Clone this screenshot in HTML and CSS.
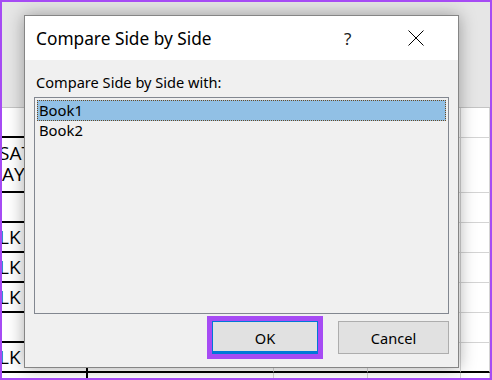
FILE: index.html
```html
<!DOCTYPE html>
<html lang="en">
<head>
  <meta charset="UTF-8" />
  <title>Compare Side by Side</title>
  <link rel="stylesheet" href="styles.css">
</head>
<body>
  <div class="screen">
    <div class="sheet">
      <div class="ribbon"></div>
      <div class="grid">
        <div class="row r-head">
          <div class="cell col-a"></div><div class="cell col-b"></div><div class="cell col-c"></div><div class="cell col-d"></div><div class="cell col-e"></div>
        </div>
        <div class="row r-tall">
          <div class="cell col-a two">SAT<br>AY</div><div class="cell col-b"></div><div class="cell col-c"></div><div class="cell col-d"></div><div class="cell col-e"></div>
        </div>
        <div class="row">
          <div class="cell col-a"></div><div class="cell col-b"></div><div class="cell col-c"></div><div class="cell col-d"></div><div class="cell col-e"></div>
        </div>
        <div class="row">
          <div class="cell col-a">LK</div><div class="cell col-b"></div><div class="cell col-c"></div><div class="cell col-d"></div><div class="cell col-e"></div>
        </div>
        <div class="row">
          <div class="cell col-a">LK</div><div class="cell col-b"></div><div class="cell col-c"></div><div class="cell col-d"></div><div class="cell col-e"></div>
        </div>
        <div class="row">
          <div class="cell col-a">LK</div><div class="cell col-b"></div><div class="cell col-c"></div><div class="cell col-d"></div><div class="cell col-e"></div>
        </div>
        <div class="row">
          <div class="cell col-a"></div><div class="cell col-b"></div><div class="cell col-c"></div><div class="cell col-d"></div><div class="cell col-e"></div>
        </div>
        <div class="row r-last">
          <div class="cell col-a">LK</div><div class="cell col-b"></div><div class="cell col-c"></div><div class="cell col-d"></div><div class="cell col-e"></div>
        </div>
        <div class="row r-foot">
          <div class="cell col-a">H</div><div class="cell col-b">EO</div><div class="cell col-c"></div><div class="cell col-d"></div><div class="cell col-e"></div>
        </div>
      </div>
    </div>

    <div class="dialog">
      <div class="titlebar">
        <span class="title">Compare Side by Side</span>
        <span class="help">?</span>
        <span class="close">
          <svg width="16" height="16" viewBox="0 0 16 16"><path d="M0.5 0.5 L15.5 15.5 M15.5 0.5 L0.5 15.5" stroke="#000" stroke-width="1" fill="none"/></svg>
        </span>
      </div>
      <div class="body">
        <div class="label">Compare Side by Side with:</div>
        <div class="listbox">
          <div class="item selected">Book1</div>
          <div class="item">Book2</div>
        </div>
        <div class="buttons">
          <div class="highlight">
            <button class="btn default">OK</button>
          </div>
          <button class="btn">Cancel</button>
        </div>
      </div>
    </div>
  </div>
</body>
</html>
```

FILE: styles.css
```css
body {
  margin: 0;
  font-family: "Noto Sans", sans-serif;
  background: #fff;
}

.screen {
  position: relative;
  width: 492px;
  height: 380px;
  box-sizing: border-box;
  border: 2px solid #a64bf4;
  overflow: hidden;
  background: #fff;
}

/* spreadsheet behind the dialog */
.ribbon {
  height: 105px;
  background: #e6e6e6;
  border-bottom: 1px solid #c4c4c4;
}

.row {
  display: flex;
  height: 30px;
}

.r-head {
  height: 30px;
}

.r-tall {
  height: 55px;
}

.r-foot {
  height: 8px;
}

.cell {
  box-sizing: border-box;
  height: 100%;
  border-bottom: 1px solid #d4d4d4;
  border-right: 1px solid #d4d4d4;
  overflow: hidden;
  white-space: nowrap;
  font-family: "Open Sans", sans-serif;
  font-size: 19px;
  line-height: 28px;
  color: #000;
}

.col-a {
  width: 88px;
  border-bottom: 2px solid #000;
  border-right: 2px solid #000;
  text-indent: -3px;
}

.two {
  line-height: 21px;
  padding-top: 5px;
}

.col-b { width: 192px; }
.col-c { width: 97px; }
.col-d { width: 95px; }
.col-e { width: 30px; }

.r-last .cell {
  border-bottom: 2px solid #000;
}

.r-foot .cell {
  border-bottom: none;
  line-height: 22px;
}

.r-foot .col-b {
  padding-left: 4px;
}

/* dialog */
.dialog {
  position: absolute;
  left: 22px;
  top: 13px;
  width: 435px;
  height: 353px;
  box-sizing: border-box;
  border: 1px solid #858585;
  background: #f0f0f0;
  box-shadow: 0 0 16px rgba(0, 0, 0, 0.34);
  display: flex;
  flex-direction: column;
}

.titlebar {
  height: 44px;
  background: #fff;
  display: flex;
  align-items: center;
  padding-left: 11px;
}

.title {
  font-size: 17.3px;
  color: #000;
  flex: 1;
}

.help {
  font-size: 17px;
  color: #222;
  width: 64px;
}

.close {
  width: 50px;
  height: 16px;
  display: flex;
}

.body {
  flex: 1;
  padding: 13px 9px 0 9px;
  display: flex;
  flex-direction: column;
}

.label {
  font-size: 14.6px;
  line-height: 18px;
  color: #000;
  padding-left: 2px;
  height: 24px;
}

.listbox {
  height: 217px;
  box-sizing: border-box;
  border: 1px solid #828790;
  background: #f0f0f0;
  padding: 2px;
}

.item {
  height: 21px;
  box-sizing: border-box;
  font-size: 14.8px;
  line-height: 19px;
  padding-left: 2px;
  color: #000;
}

.selected {
  background: #91c0e5;
  border: 1px dotted #6b4a22;
  padding-left: 1px;
}

.buttons {
  display: flex;
  justify-content: flex-end;
  align-items: center;
  gap: 15px;
  padding-top: 2px;
}

.highlight {
  border: 5px solid #a64bf4;
  line-height: 0;
}

.btn {
  width: 111px;
  height: 33px;
  box-sizing: border-box;
  background: #e1e1e1;
  border: 1px solid #adadad;
  font-family: "Noto Sans", sans-serif;
  font-size: 14.6px;
  color: #000;
  padding: 0;
}

.btn.default {
  width: 106px;
  border: 1px solid #0078d7;
  border-bottom: 3px solid #0078d7;
  padding-top: 2px;
}
```
